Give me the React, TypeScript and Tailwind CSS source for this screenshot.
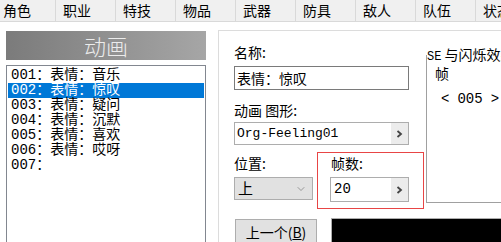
import { ChevronDown } from 'lucide-react';

const TABS = ['角色', '职业', '特技', '物品', '武器', '防具', '敌人', '队伍', '状态'];

const ITEMS = [
  '001：表情：音乐',
  '002：表情：惊叹',
  '003：表情：疑问',
  '004：表情：沉默',
  '005：表情：喜欢',
  '006：表情：哎呀',
  '007：',
];

const cjk = { fontFamily: '"Noto Sans CJK SC", "Liberation Sans", sans-serif' };
const mono = { fontFamily: '"Liberation Mono", "Noto Sans CJK SC", monospace' };

function Arrow() {
  return (
    <div className="w-[17px] h-full bg-[#ececec] flex items-center justify-center">
      <svg width="7" height="8" viewBox="0 0 7 8">
        <path d="M1.5 1 L5 4 L1.5 7" stroke="#444" strokeWidth="1.8" fill="none" />
      </svg>
    </div>
  );
}

export default function App() {
  return (
    <div className="w-[501px] h-[242px] overflow-hidden bg-white text-black text-[14px]" style={cjk}>
      {/* Tab bar */}
      <div className="h-[22px] flex bg-[#f0f0f0] border-b border-[#d9d9d9] leading-[21px]">
        {TABS.map((t, i) => (
          <div
            key={t}
            className={`shrink-0 border-r border-[#d9d9d9] ${i === 0 ? 'w-[56px] pl-[3px]' : 'w-[60px] pl-[7px]'}`}
          >
            {t}
          </div>
        ))}
      </div>

      <div className="flex">
        {/* Left column */}
        <div className="ml-[6px] w-[200px] pt-[9px] shrink-0">
          <div className="h-[29px] flex items-center justify-center text-[22px] text-[#ececec] font-light bg-gradient-to-r from-[#7b7b7b] to-[#a6a6a6]">
            动画
          </div>
          <div className="mt-[5px] h-[190px] border border-[#828790] pt-[2px] px-[1px]" style={mono}>
            {ITEMS.map((it, i) => (
              <div
                key={it}
                className={`h-[15px] leading-[15px] pl-[3px] whitespace-nowrap ${i === 1 ? 'bg-[#0078d7] text-white' : ''}`}
              >
                {it}
              </div>
            ))}
          </div>
        </div>

        {/* Right panel */}
        <div className="ml-[12px] mt-[8px] w-[300px] h-[230px] shrink-0 border border-[#dcdcdc] pl-[15px] flex">
          <div className="w-[175px] shrink-0">
            <div className="mt-[13px] leading-[17px]">名称:</div>
            <div className="mt-[5px] h-[24px] border border-[#7a7a7a] pl-[2px] leading-[22px]">表情：惊叹</div>
            <div className="mt-[12px] leading-[17px]">动画 图形:</div>
            <div className="mt-[3px] h-[23px] border border-[#adadad] flex items-center">
              <div className="flex-1 pl-[2px] text-[13px]" style={mono}>Org-Feeling01</div>
              <Arrow />
            </div>

            <div className="mt-[7px] flex">
              <div className="w-[79px] shrink-0 pt-[3px]">
                <div className="leading-[17px]">位置:</div>
                <div className="mt-[5px] h-[23px] bg-[#e1e1e1] border border-[#adadad] flex items-center justify-between pl-[3px] pr-[5px]">
                  <span className="text-[15px]">上</span>
                  <ChevronDown size={12} strokeWidth={1.2} color="#666" />
                </div>
              </div>
              <div className="ml-[4px] w-[107px] h-[57px] shrink-0 border border-[#e84545] pl-[12px] pt-[2px]">
                <div className="leading-[17px] pl-[1px]">帧数:</div>
                <div className="mt-[5px] w-[79px] h-[25px] border border-[#adadad] flex items-center">
                  <div className="flex-1 pl-[3px] text-[14px]" style={mono}>20</div>
                  <Arrow />
                </div>
              </div>
            </div>

            <div className="mt-[9px] flex">
              <div className="ml-[1px] mt-[1px] w-[82px] h-[26px] shrink-0 bg-[#e1e1e1] border border-[#adadad] text-center leading-[24px] text-[14px]">
                上一个(<span className="underline">B</span>)
              </div>
              <div className="ml-[14px] w-[190px] h-[30px] shrink-0 bg-black border border-[#adadad]" />
            </div>
          </div>

          {/* SE group */}
          <div className="ml-[17px] w-[110px] shrink-0 relative pt-[24px]">
            <div className="absolute left-[1px] top-[15px] bg-white pr-[2px] leading-[17px] whitespace-nowrap">
              <span className="text-[12px]" style={mono}>SE</span> 与闪烁效果
            </div>
            <div className="h-[148px] border border-[#a0a0a0] pl-[8px] pt-[9px]">
              <div className="leading-[17px]">帧</div>
              <div className="mt-[9px] ml-[6px] flex gap-[8px] leading-[16px]" style={mono}>
                <span>&lt;</span>
                <span>005</span>
                <span>&gt;</span>
              </div>
            </div>
          </div>
        </div>
      </div>
    </div>
  );
}
